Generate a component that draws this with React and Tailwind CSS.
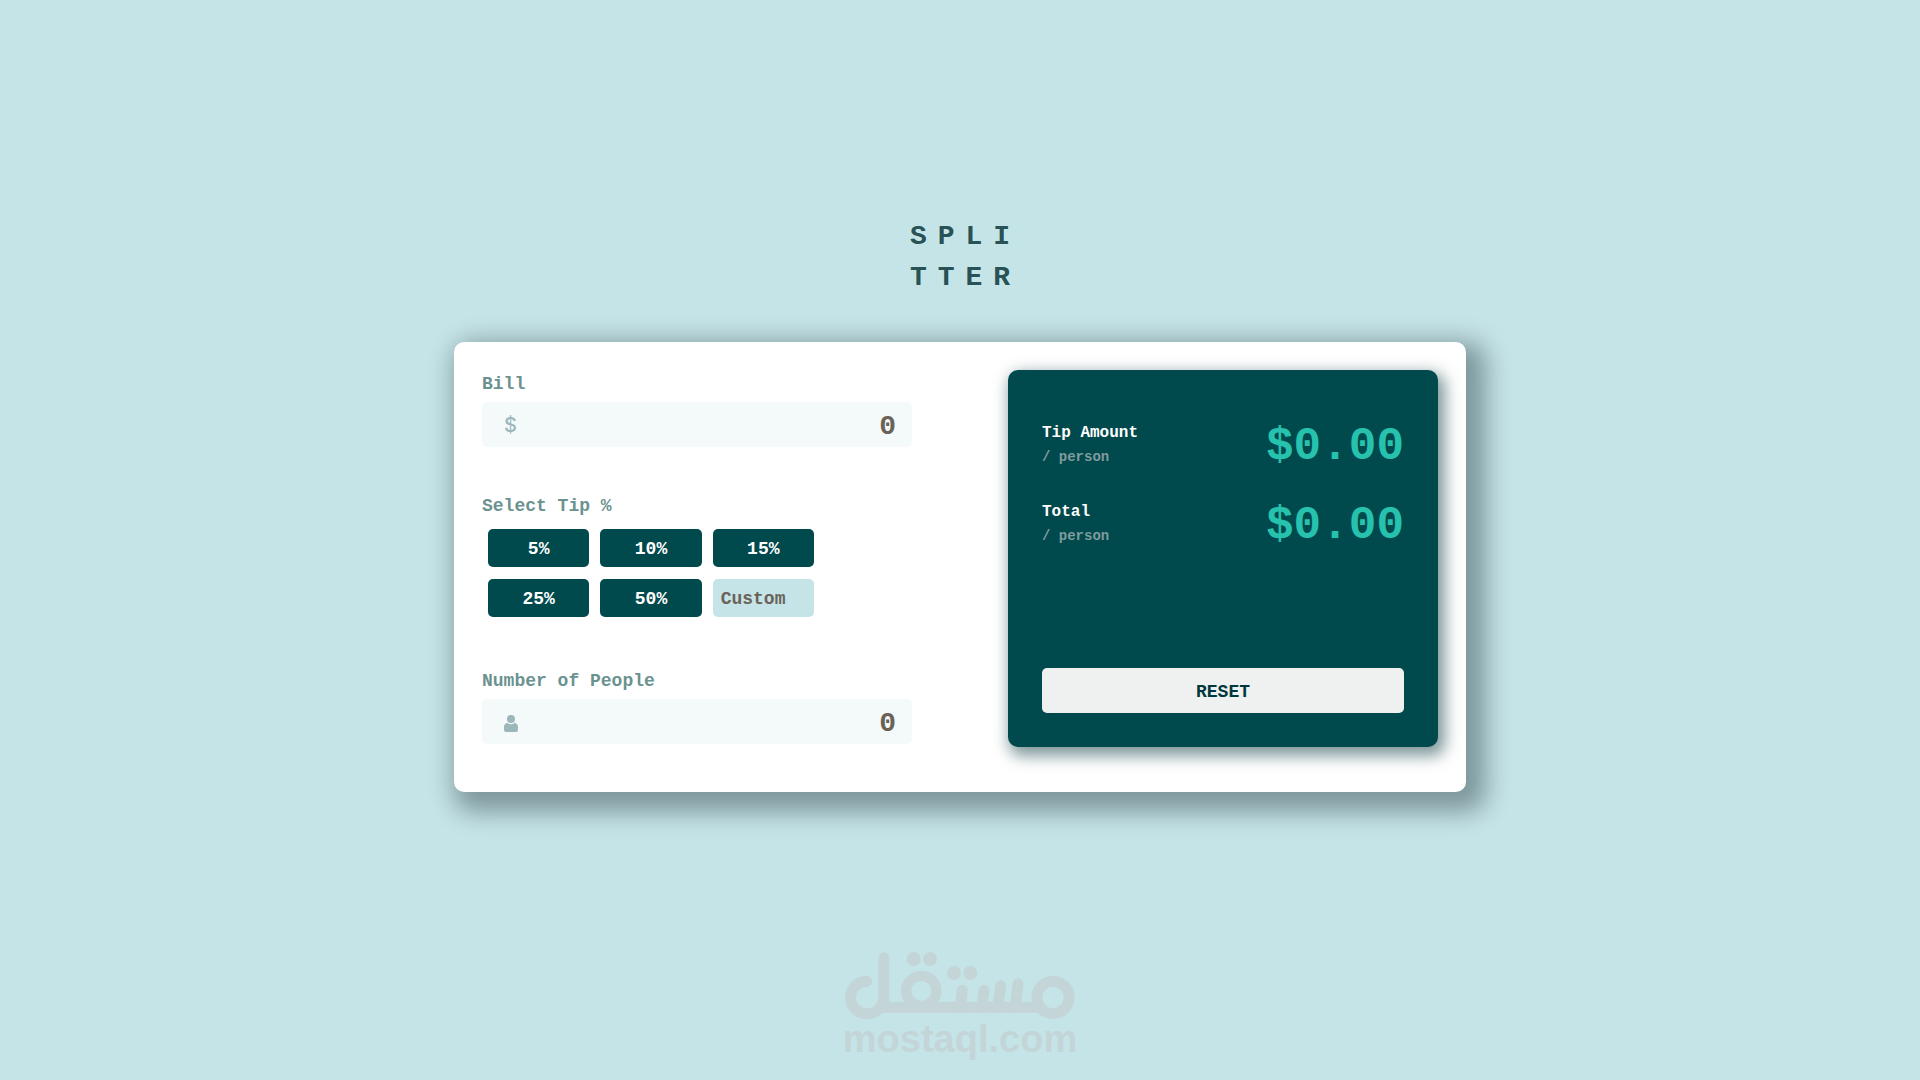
import { useState } from "react";

const FIELD =
  "h-[45px] w-full rounded-[5px] bg-[#f4fafa] pt-1 pl-12 pr-4 text-right text-[28px] font-bold text-[#00474b] placeholder-[#6b6257] outline-none focus:ring-2 focus:ring-[#26c2ae]";
const LABEL = "block pt-px text-lg leading-[26px] font-bold text-[#6b9290]";

function PersonIcon() {
  return (
    <svg viewBox="0 0 14 17" className="mt-1 h-[17px] w-[14px]" fill="#9bb7ba" aria-hidden="true">
      <circle cx="7" cy="4" r="4" />
      <path d="M3.300 7.700C1.200 8.300 0 9.900 0 12v2.400C0 16 .9 17 2.400 17h9.200c1.500 0 2.400-1 2.400-2.600V12c0-2.100-1.200-3.700-3.300-4.300C9.600 8.700 8.400 9.200 7 9.200S4.400 8.700 3.300 7.700Z" />
    </svg>
  );
}

function Field({ id, label, icon, value, onChange }) {
  return (
    <div>
      <label htmlFor={id} className={LABEL}>
        {label}
      </label>
      <div className="relative mt-[5px]">
        <span className="pointer-events-none absolute inset-y-0 left-[22px] flex items-center text-[#9bb7ba]">
          {icon}
        </span>
        <input
          id={id}
          type="text"
          inputMode="decimal"
          placeholder="0"
          value={value}
          onChange={(e) => onChange(e.target.value)}
          className={FIELD}
        />
      </div>
    </div>
  );
}

function Result({ title, amount }) {
  return (
    <div className="flex items-center justify-between">
      <div>
        <p className="text-base leading-6 font-bold text-white">{title}</p>
        <p className="text-sm leading-6 font-bold text-[#7f9c9f]">/ person</p>
      </div>
      <p className="pt-1 text-[46px] leading-[44px] font-bold text-[#26c2ae]">${amount.toFixed(2)}</p>
    </div>
  );
}

function Watermark() {
  return (
    <footer className="mt-auto flex flex-col items-center pt-10 pb-[22px]">
      <svg
        viewBox="45 36 690 204"
        className="h-[68px] w-[230px]"
        fill="none"
        stroke="#c4d5d8"
        strokeWidth="33"
        strokeLinecap="round"
        role="img"
        aria-label="مستقل"
      >
        <circle cx="669" cy="172" r="48.500" />
        <circle cx="274" cy="153" r="45.500" strokeWidth="31" />
        <path d="M161.500 53V172A51 49 0 0 1 110 221A48.500 48.500 0 0 1 110 124" />
        <path d="M150 202H632" strokeLinecap="butt" />
        <path d="M397 151L391 200M462 151L456 200M512 138L503 200M564 131L556 200" />
        <g fill="#c4d5d8" stroke="none">
          <circle cx="251" cy="57" r="21" />
          <circle cx="300" cy="57" r="21" />
          <circle cx="372" cy="99" r="21" />
          <circle cx="421" cy="99" r="21" />
        </g>
      </svg>
      <p className="font-['Liberation_Sans',sans-serif] text-[38px] leading-[38px] font-bold text-[#c4d5d8]">
        mostaql.com
      </p>
    </footer>
  );
}

export default function App() {
  const [bill, setBill] = useState("");
  const [people, setPeople] = useState("");
  const [custom, setCustom] = useState("");
  const [tip, setTip] = useState(0);

  const count = Number(people) || 0;
  const total = Number(bill) || 0;
  const rate = (Number(custom) || tip) / 100;
  const tipEach = count ? (total * rate) / count : 0;
  const totalEach = count ? total / count + tipEach : 0;

  const reset = () => {
    setBill("");
    setPeople("");
    setCustom("");
    setTip(0);
  };

  return (
    <div className="flex min-h-screen flex-col items-center bg-[#c5e4e7] px-6 pt-[216px] font-['Liberation_Mono',monospace]">
      <h1 className="pl-[11px] text-[28px] leading-[41px] font-bold tracking-[11px] text-[#285255]">
        SPLI
        <br />
        TTER
      </h1>

      <main className="mt-11 grid w-full max-w-[1012px] grid-cols-1 items-start gap-24 rounded-[10px] bg-white px-7 pt-7 pb-[45px] shadow-[10px_10px_25px_10px_rgba(0,20,25,0.36)] md:grid-cols-2">
        <section>
          <Field
            id="bill"
            label="Bill"
            icon={<span className="font-['Inter',sans-serif] text-xl font-medium">$</span>}
            value={bill}
            onChange={setBill}
          />

          <fieldset className="mt-[45px]">
            <legend className={LABEL}>Select Tip %</legend>
            <div className="mt-[10px] ml-[6px] grid w-[326px] grid-cols-3 gap-x-[11px] gap-y-3">
              {[5, 10, 15, 25, 50].map((p) => (
                <button
                  key={p}
                  type="button"
                  onClick={() => setTip(p)}
                  className="h-[38px] rounded-[5px] bg-[#00494c] pt-0.5 text-lg font-bold text-white hover:bg-[#26c2ae]"
                >
                  {p}%
                </button>
              ))}
              <input
                type="text"
                aria-label="Custom tip"
                placeholder="Custom"
                value={custom}
                onChange={(e) => setCustom(e.target.value)}
                className="h-[38px] w-full min-w-0 rounded-[5px] bg-[#c5e4e7] px-2 pt-0.5 text-lg font-bold text-[#00474b] placeholder-[#6a6258] outline-none"
              />
            </div>
          </fieldset>

          <div className="mt-[50px]">
            <Field
              id="people"
              label="Number of People"
              icon={<PersonIcon />}
              value={people}
              onChange={setPeople}
            />
          </div>
        </section>

        <section className="flex min-h-[377px] flex-col rounded-[10px] bg-[#00494c] px-[34px] pt-[51px] pb-[34px] shadow-[4px_6px_15px_3px_rgba(0,50,55,0.5)]">
          <div className="flex flex-col gap-[31px]">
            <Result title="Tip Amount" amount={tipEach} />
            <Result title="Total" amount={totalEach} />
          </div>
          <button
            type="button"
            onClick={reset}
            className="mt-auto h-[45px] w-full rounded-[5px] bg-[#eff1f1] pt-0.5 text-lg font-bold text-[#00383b] hover:bg-white"
          >
            RESET
          </button>
        </section>
      </main>

      <Watermark />
    </div>
  );
}
